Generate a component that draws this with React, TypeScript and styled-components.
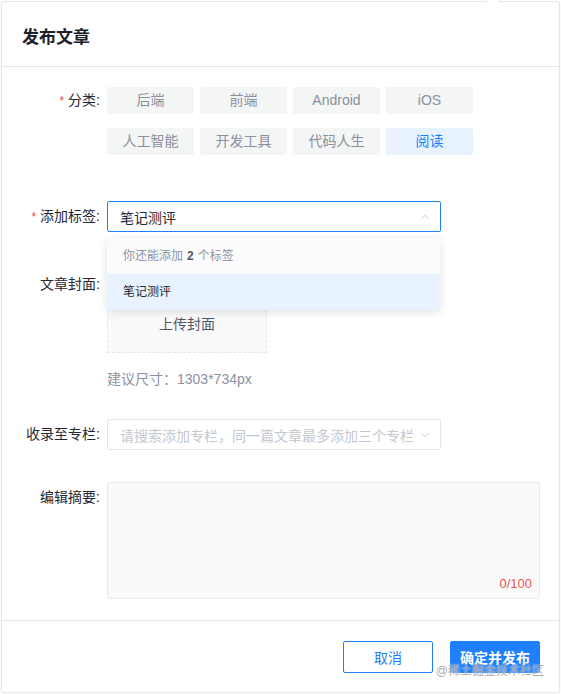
import React from "react";
import styled, { createGlobalStyle } from "styled-components";
import { ChevronUp, ChevronDown } from "lucide-react";

const GlobalStyle = createGlobalStyle`
  html, body {
    margin: 0;
    padding: 0;
    background: #fff;
  }
  body {
    font-family: "Liberation Sans", "Noto Sans CJK SC", sans-serif;
    color: #252933;
  }
  * {
    box-sizing: border-box;
  }
`;

const Panel = styled.div`
  position: relative;
  margin: 1px 0 0 1px;
  width: 559px;
  height: 692px;
  border: 1px solid #e4e6eb;
  border-radius: 3px;
  background: #fff;
  display: flex;
  flex-direction: column;
  box-shadow: 0 1px 2px rgba(0, 0, 0, 0.06);
`;

const Arrow = styled.div`
  position: absolute;
  top: -6px;
  left: 486px;
  width: 10px;
  height: 10px;
  background: #fff;
  border-top: 1px solid #e4e6eb;
  border-left: 1px solid #e4e6eb;
  transform: rotate(45deg);
`;

const Header = styled.div`
  height: 65px;
  flex-shrink: 0;
  display: flex;
  align-items: center;
  padding: 2px 0 0 20px;
  border-bottom: 1px solid #e4e6eb;
`;

const Title = styled.h1`
  margin: 0;
  font-size: 17px;
  font-weight: 600;
  color: #1d2129;
`;

const Body = styled.div`
  flex: 1;
  padding-top: 20px;
`;

const Row = styled.div<{ $mb?: number }>`
  display: flex;
  align-items: flex-start;
  margin-bottom: ${(p) => p.$mb ?? 0}px;
`;

const Label = styled.div<{ $lh?: number }>`
  width: 98px;
  margin-right: 7px;
  flex-shrink: 0;
  text-align: right;
  font-size: 14px;
  line-height: ${(p) => p.$lh ?? 30}px;
  color: #252933;
  white-space: nowrap;
`;

const Required = styled.span`
  color: #f53f3f;
  font-size: 12px;
  margin-right: 4px;
`;

const CategoryGrid = styled.div`
  display: grid;
  grid-template-columns: repeat(4, 87px);
  column-gap: 6px;
  row-gap: 14px;
`;

const CategoryButton = styled.div<{ $active?: boolean }>`
  height: 27px;
  line-height: 27px;
  text-align: center;
  font-size: 14px;
  border-radius: 2px;
  background: ${(p) => (p.$active ? "#e8f3ff" : "#f4f5f5")};
  color: ${(p) => (p.$active ? "#1e80ff" : "#8a919f")};
`;

const SelectWrap = styled.div`
  position: relative;
`;

const Select = styled.div<{ $focused?: boolean; $width: number }>`
  width: ${(p) => p.$width}px;
  height: 31px;
  display: flex;
  align-items: center;
  justify-content: space-between;
  padding: 0 8px 0 12px;
  border-radius: 2px;
  border: 1px solid ${(p) => (p.$focused ? "#1e80ff" : "#e4e6eb")};
  font-size: 14px;
`;

const SelectText = styled.span<{ $placeholder?: boolean }>`
  color: ${(p) => (p.$placeholder ? "#c2c8d1" : "#252933")};
  white-space: nowrap;
`;

const Dropdown = styled.div`
  position: absolute;
  top: 37px;
  left: 0;
  width: 333px;
  background: #fff;
  border-radius: 2px;
  box-shadow: 0 2px 10px rgba(0, 0, 0, 0.12);
  z-index: 2;
`;

const DropdownRow = styled.div<{ $active?: boolean }>`
  height: 36px;
  line-height: 36px;
  padding-left: 16px;
  font-size: 12px;
  color: ${(p) => (p.$active ? "#252933" : "#8a919f")};
  background: ${(p) => (p.$active ? "#e8f3ff" : "#fcfcfc")};
`;

const Strong = styled.b`
  color: #515767;
  margin: 0 4px;
`;

const UploadBox = styled.div`
  width: 160px;
  height: 84px;
  display: flex;
  align-items: flex-end;
  justify-content: center;
  padding-bottom: 18px;
  font-size: 14px;
  line-height: 20px;
  color: #515767;
  background: #fafafa;
  border: 1px dashed #e4e6eb;
`;

const Hint = styled.div`
  margin-top: 16px;
  font-size: 14px;
  line-height: 20px;
  color: #8a919f;
`;

const TextArea = styled.div`
  position: relative;
  width: 433px;
  height: 117px;
  margin-top: -2px;
  background: #fafafa;
  border: 1px solid #e9eaec;
  border-radius: 2px;
`;

const Counter = styled.span`
  position: absolute;
  right: 7px;
  bottom: 7px;
  font-size: 13px;
  color: #e8544d;
`;

const Footer = styled.div`
  position: relative;
  height: 72px;
  flex-shrink: 0;
  border-top: 1px solid #e4e6eb;
  display: flex;
  justify-content: flex-end;
  align-items: flex-start;
  gap: 17px;
  padding: 20px 19px 0 0;
`;

const Button = styled.button<{ $primary?: boolean }>`
  width: 90px;
  height: 32px;
  font-family: inherit;
  font-size: 14px;
  font-weight: ${(p) => (p.$primary ? 600 : 400)};
  border-radius: 2px;
  border: 1px solid #1e80ff;
  background: ${(p) => (p.$primary ? "#1e80ff" : "#fff")};
  color: ${(p) => (p.$primary ? "#fff" : "#1e80ff")};
  cursor: pointer;
`;

const Watermark = styled.span`
  position: absolute;
  right: 15px;
  bottom: 14px;
  font-size: 12px;
  color: rgba(140, 140, 140, 0.75);
  text-shadow: 0 0 2px #fff;
  pointer-events: none;
`;

const categories = ["后端", "前端", "Android", "iOS", "人工智能", "开发工具", "代码人生", "阅读"];

export default function App() {
  return (
    <>
      <GlobalStyle />
      <Panel>
        <Arrow />
        <Header>
          <Title>发布文章</Title>
        </Header>
        <Body>
          <Row $mb={46}>
            <Label $lh={27}>
              <Required>*</Required>分类:
            </Label>
            <CategoryGrid>
              {categories.map((c) => (
                <CategoryButton key={c} $active={c === "阅读"}>
                  {c}
                </CategoryButton>
              ))}
            </CategoryGrid>
          </Row>

          <Row $mb={36}>
            <Label $lh={31}>
              <Required>*</Required>添加标签:
            </Label>
            <SelectWrap>
              <Select $focused $width={334}>
                <SelectText>笔记测评</SelectText>
                <ChevronUp size={14} strokeWidth={1.5} color="#c2c8d1" />
              </Select>
              <Dropdown>
                <DropdownRow>
                  你还能添加<Strong>2</Strong>个标签
                </DropdownRow>
                <DropdownRow $active>笔记测评</DropdownRow>
              </Dropdown>
            </SelectWrap>
          </Row>

          <Row $mb={30}>
            <Label>文章封面:</Label>
            <div>
              <UploadBox>上传封面</UploadBox>
              <Hint>建议尺寸：1303*734px</Hint>
            </div>
          </Row>

          <Row $mb={34}>
            <Label $lh={31}>收录至专栏:</Label>
            <Select $width={334}>
              <SelectText $placeholder>请搜索添加专栏，同一篇文章最多添加三个专栏</SelectText>
              <ChevronDown size={14} strokeWidth={1.5} color="#c2c8d1" />
            </Select>
          </Row>

          <Row>
            <Label $lh={26}>编辑摘要:</Label>
            <TextArea>
              <Counter>0/100</Counter>
            </TextArea>
          </Row>
        </Body>
        <Footer>
          <Button>取消</Button>
          <Button $primary>确定并发布</Button>
          <Watermark>@稀土掘金技术社区</Watermark>
        </Footer>
      </Panel>
    </>
  );
}
